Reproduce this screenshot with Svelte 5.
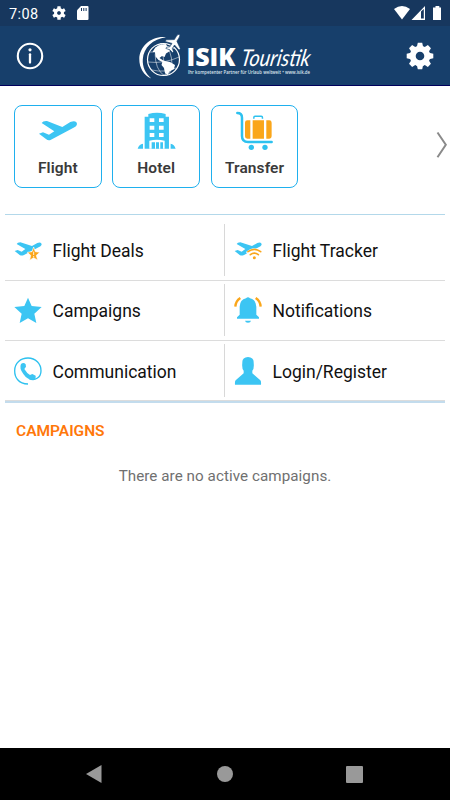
<script>
  const shortcuts = ['Flight', 'Hotel', 'Transfer'];
  const rows = [
    ['Flight Deals', 'Flight Tracker'],
    ['Campaigns', 'Notifications'],
    ['Communication', 'Login/Register']
  ];
  const gearTeeth = [0, 45, 90, 135, 180, 225, 270, 315];
  const smallTeeth = [0, 60, 120, 180, 240, 300];
</script>

{#snippet smallPlane()}
  <path fill="#3cc5f3" d="M44 136L53 133L65 138L76 130L50 115Q52 110 61 110L96 121L112 112Q125 108 125 117Q124 122 113 126L72 148Q66 151 60 149Z" />
{/snippet}

<div class="screen">
  <div class="status">
    <span class="clock">7:08</span>
    <svg class="sgear" viewBox="-7 -7 14 14" width="14" height="14">
      {#each smallTeeth as a}
        <rect x="-1.7" y="-6.8" width="3.4" height="5" rx=".5" fill="#fff" transform={`rotate(${a})`} />
      {/each}
      <circle r="3.7" fill="none" stroke="#fff" stroke-width="2.6" />
    </svg>
    <svg class="sd" viewBox="0 0 12 14" width="12" height="14">
      <path fill="#fff" d="M4 0H10.5Q11.5 0 11.5 1V13Q11.5 14 10.5 14H1Q0 14 0 13V4.3Z" />
      <path stroke="#17375e" stroke-width="1" d="M4.5 2V5M6.8 2V5M9.1 2V5" />
    </svg>
    <svg class="signals" viewBox="0 0 50 16" width="50" height="16">
      <path fill="#fff" d="M2 4Q10 -2 18 4L10 14.5Z" />
      <path fill="#fff" fill-rule="evenodd" d="M33 1V15H19.5ZM29 6.5V13.5H31.8V4Z" />
      <path fill="#fff" d="M43.5 1H47.3V2.5H49V15H41V2.5H43.5Z" />
    </svg>
  </div>

  <header>
    <svg viewBox="0 0 28 28" width="28" height="28">
      <circle cx="14" cy="14" r="12.2" fill="none" stroke="#fff" stroke-width="2.1" />
      <circle cx="14" cy="7.8" r="1.6" fill="#fff" />
      <path d="M14 12.3V20.5" stroke="#fff" stroke-width="2.3" stroke-linecap="round" />
    </svg>
    <svg class="logo" viewBox="136 30 178 52" width="178" height="52">
      <path fill="#fff" d="M165 37.2C151 35.5 138.5 46 138.3 59C138.2 68 143 75.5 150.3 78.6C144.5 73.5 141.3 67 141.8 59.3C142.5 47.5 152 38.8 165 37.2Z" />
      <g fill="none" stroke="#fff" stroke-width=".5">
        <circle cx="162.5" cy="59.5" r="16" stroke-width="1.2" />
        <ellipse cx="162.5" cy="59.5" rx="8" ry="16" transform="rotate(-10 162.5 59)" />
        <path d="M160 43L165 75M147 62Q163 64 178.2 57M149 52Q163 53 174 48M151 70Q164 73 175 68" />
      </g>
      <path fill="#fff" d="M154.3 47.5L159 44.7L165 44L166 46L169 46.5L167.5 49.5L169 51L165 53.5L163.6 57L161 56L158.5 58L161.5 60L164 61L169 62L174 65L173 69L168.5 71.5L166.5 75L164 73L163 68L160.5 65L161.3 62L157.5 60L154.5 56.5L154 52L151.5 52Z" />
      <g transform="translate(173.3 42.5) rotate(32)">
        <path fill="#fff" stroke="#173f6b" stroke-width=".6" d="M0 -9.5Q1.5 -9.5 1.5 -6V-2.5L8.3 2V4L1.5 2V6L4 8V9.5L0 8.6L-4 9.5V8L-1.5 6V2L-8.3 4V2L-1.5 -2.5V-6Q-1.5 -9.5 0 -9.5Z" />
      </g>
      <text class="isik" x="185.5" y="66" textLength="49" lengthAdjust="spacingAndGlyphs">ISIK</text>
      <text class="tour" transform="translate(239 65.5) skewX(-10)" textLength="69" lengthAdjust="spacingAndGlyphs">Touristik</text>
      <text class="tag" x="187" y="74" textLength="122" lengthAdjust="spacingAndGlyphs">Ihr kompetenter Partner für Urlaub weltweit • www.isik.de</text>
    </svg>
    <svg viewBox="-14 -14 28 28" width="28" height="28">
      {#each gearTeeth as a}
        <path fill="#fff" d="M-3.4 -8L-2.2 -13.3H2.2L3.4 -8Z" transform={`rotate(${a})`} />
      {/each}
      <circle r="7.3" fill="none" stroke="#fff" stroke-width="6" />
    </svg>
  </header>

  <section class="shortcuts">
    {#each shortcuts as name}
      <div class="card">
        {#if name === 'Flight'}
          <svg viewBox="109 47 130 120" width="43.3" height="40">
            <path fill="#3cc5f3" d="M118 118L130 114L148 121L164 111L126 86Q130 79 142 80L188 98L212 83Q231 77 232 89Q232 97 216 103L154 136Q146 140 139 134Z" />
          </svg>
        {:else if name === 'Hotel'}
          <svg viewBox="403 46 130 120" width="43.3" height="40">
            <path fill="#3cc5f3" d="M443 66V58Q469 50 495 58V66H505V162H432V66Z" />
            <path fill="#fff" d="M447 71h14v11h-14zM475 71h14v11h-14zM447 93h14v12h-14zM475 93h14v12h-14zM447 115h14v12h-14zM475 115h14v12h-14zM446 162V138Q469 132 492 138V162Z" />
            <path fill="#3cc5f3" d="M453 143H463V162H453ZM466 143H475V162H466ZM479 143H487V162H479ZM411 162Q415 149 427 147V162ZM525 162Q521 149 510 147V162Z" />
          </svg>
        {:else}
          <svg viewBox="99 46 130 120" width="43.3" height="40">
            <path d="M112 55Q126 55 126 69V124Q126 142 144 142H215" fill="none" stroke="#2dc1ef" stroke-width="7.5" stroke-linecap="round" />
            <path d="M161.500 72V69Q161.500 65 165 65H184Q187.500 65 187.500 69V72" fill="none" stroke="#2dc1ef" stroke-width="4.5" />
            <path fill="#faa61a" d="M142 77H151V132H142Q135 132 135 125V84Q135 77 142 77ZM158 77H192V132H158ZM199 77H208Q215 77 215 84V125Q215 132 208 132H199Z" />
            <circle cx="154" cy="158" r="8" fill="#2dc1ef" /><circle cx="195" cy="158" r="8" fill="#2dc1ef" />
          </svg>
        {/if}
        <span>{name}</span>
      </div>
    {/each}
    <svg class="chevron" viewBox="0 0 12 28" width="12" height="28">
      <path d="M1.5 1.500L9.8 13.8L1.5 26.2" fill="none" stroke="#8a8a8a" stroke-width="2" />
    </svg>
  </section>

  <section class="menu">
    {#each rows as row}
      <div class="row">
        {#each row as name}
          <div class="item">
            {#if name === 'Flight Deals'}
              <svg viewBox="42 91 84 84" width="28" height="28">
                {@render smallPlane()}
                <path fill="#faa61a" stroke="#fff" stroke-width="2" d="M101 124L106 138L120 140L109 149L113 164L101 156L89 164L92 149L82 140L96 138Z" />
                <path d="M101 138V148M101 151V154" stroke="#fff" stroke-width="2.5" />
              </svg>
            {:else if name === 'Flight Tracker'}
              <svg viewBox="42 91 84 84" width="28" height="28">
                {@render smallPlane()}
                <path d="M78 139Q103 116 128 139L116 161H90Z" fill="#fff" />
                <g fill="none" stroke="#faa61a" stroke-width="5" stroke-linecap="round">
                  <path d="M84 138Q103 124 122 138M91 147Q103 138 115 147" />
                </g>
                <circle cx="103" cy="156" r="4.5" fill="#faa61a" />
              </svg>
            {:else if name === 'Campaigns'}
              <svg viewBox="42 274 84 84" width="28" height="28">
                <path fill="#3cc5f3" d="M84 279L95 304L125 307L103 327L109 355L84 341L59 355L65 327L43 307L73 304Z" />
              </svg>
            {:else if name === 'Notifications'}
              <svg viewBox="42 274 84 84" width="28" height="28">
                <path fill="#3cc5f3" d="M51 342V338L59 330V306Q60 285 78 281Q84 275 90 281Q108 285 109 306V330L117 338V342ZM75 348H93Q92 354 84 354Q76 354 75 348Z" />
                <path d="M61 280Q47 289 46 306M107 280Q121 289 122 306" fill="none" stroke="#faa61a" stroke-width="7" />
              </svg>
            {:else if name === 'Communication'}
              <svg viewBox="42 65 84 84" width="28" height="28">
                <path d="M84 146C55 145 44 126 44 106C44 83 62 68 84 68C107 68 123 85 123 106C123 127 104 138 87 129" fill="none" stroke="#2dc1ef" stroke-width="4" />
                <path fill="#3cc5f3" d="M63 86Q71 80 77 87L78 94L73 101Q80 113 90 119L97 116L107 121Q108 131 101 133Q84 136 70 116Q57 99 63 86Z" />
              </svg>
            {:else}
              <svg viewBox="42 65 84 84" width="28" height="28">
                <path fill="#3cc5f3" d="M84 65Q102 66 101 82Q103 101 97 106V114L121 135Q124 138 123 148H45Q44 138 47 135L71 114V106Q65 101 67 82Q66 66 84 65Z" />
              </svg>
            {/if}
            <span>{name}</span>
          </div>
        {/each}
      </div>
    {/each}
  </section>

  <h2>CAMPAIGNS</h2>
  <p>There are no active campaigns.</p>

  <nav>
    <svg viewBox="0 0 16 18" width="16" height="18"><path fill="#999" d="M0 9L15.5 0V18Z" /></svg>
    <svg class="home" viewBox="0 0 16 16" width="16" height="16"><circle cx="8" cy="8" r="8" fill="#999" /></svg>
    <svg viewBox="0 0 17 17" width="17" height="17"><rect width="17" height="17" rx="1" fill="#999" /></svg>
  </nav>
</div>

<style>
  .screen {
    width: 450px;
    height: 800px;
    display: flex;
    flex-direction: column;
    background: #fff;
    font-family: Roboto, "Liberation Sans", sans-serif;
    overflow: hidden;
  }
  svg { display: block; flex: none; }
  .status {
    height: 26px;
    flex: none;
    display: flex;
    align-items: center;
    background: #17375e;
    color: #fff;
    padding: 0 8px 0 9px;
  }
  .clock { font-size: 14.5px; width: 43px; letter-spacing: .4px; padding-top: 2px; }
  .sd { margin-left: 11px; }
  .signals { margin-left: auto; }
  header {
    box-sizing: border-box;
    height: 60px;
    flex: none;
    background: #173f6b;
    border-bottom: 1px solid #00005c;
    display: flex;
    align-items: center;
    justify-content: space-between;
    padding: 0 16px;
  }
  .logo { margin-left: 2px; overflow: visible; }
  .isik { font: 800 25px "Open Sans", sans-serif; fill: #fff; }
  .tour { font: italic 400 23px Lato, sans-serif; fill: #fff; }
  .tag { font: 600 5px "Open Sans", sans-serif; fill: #dce5ee; }
  .shortcuts {
    height: 109.5px;
    flex: none;
    padding: 18.5px 2px 0 14px;
    display: flex;
    gap: 10.7px;
  }
  .card {
    box-sizing: border-box;
    width: 87.7px;
    height: 83.5px;
    border: 1.3px solid #1fb0ee;
    border-radius: 8px;
    display: flex;
    flex-direction: column;
    align-items: center;
    padding-top: 4.5px;
    color: #3a3a3a;
    font-size: 15.5px;
    font-weight: 600;
    letter-spacing: .1px;
  }
  .card span { line-height: 20px; margin-top: 7.5px; }
  .chevron { margin-left: auto; margin-top: 26px; }
  .menu {
    margin: 0 5px;
    flex: none;
    border-top: 1px solid #b3d8ea;
    border-bottom: 2px solid #c3dced;
  }
  .row {
    box-sizing: border-box;
    height: 60.3px;
    border-bottom: 1px solid #dcdcdc;
    display: flex;
    padding: 3.5px 0;
  }
  .row:first-child { height: 65.7px; padding-top: 9px; }
  .item {
    box-sizing: border-box;
    width: 220px;
    display: flex;
    align-items: center;
    gap: 10.5px;
    padding-left: 9px;
    font-size: 17.5px;
    color: #111;
  }
  .item span { padding-top: 2px; }
  .item:first-child { border-right: 1px solid #d8d8d8; }
  h2 {
    margin: 18px 0 0 16px;
    font-size: 15.5px;
    line-height: 20px;
    font-weight: 600;
    color: #ff780a;
  }
  p {
    margin: 25px 0 0;
    text-align: center;
    font-size: 15.2px;
    line-height: 20px;
    letter-spacing: .06px;
    color: #707070;
  }
  nav {
    height: 52px;
    flex: none;
    margin-top: auto;
    background: #000;
    display: flex;
    align-items: center;
    justify-content: space-between;
    padding: 0 87px 0 86px;
  }
  .home { margin-left: 2px; }
</style>
